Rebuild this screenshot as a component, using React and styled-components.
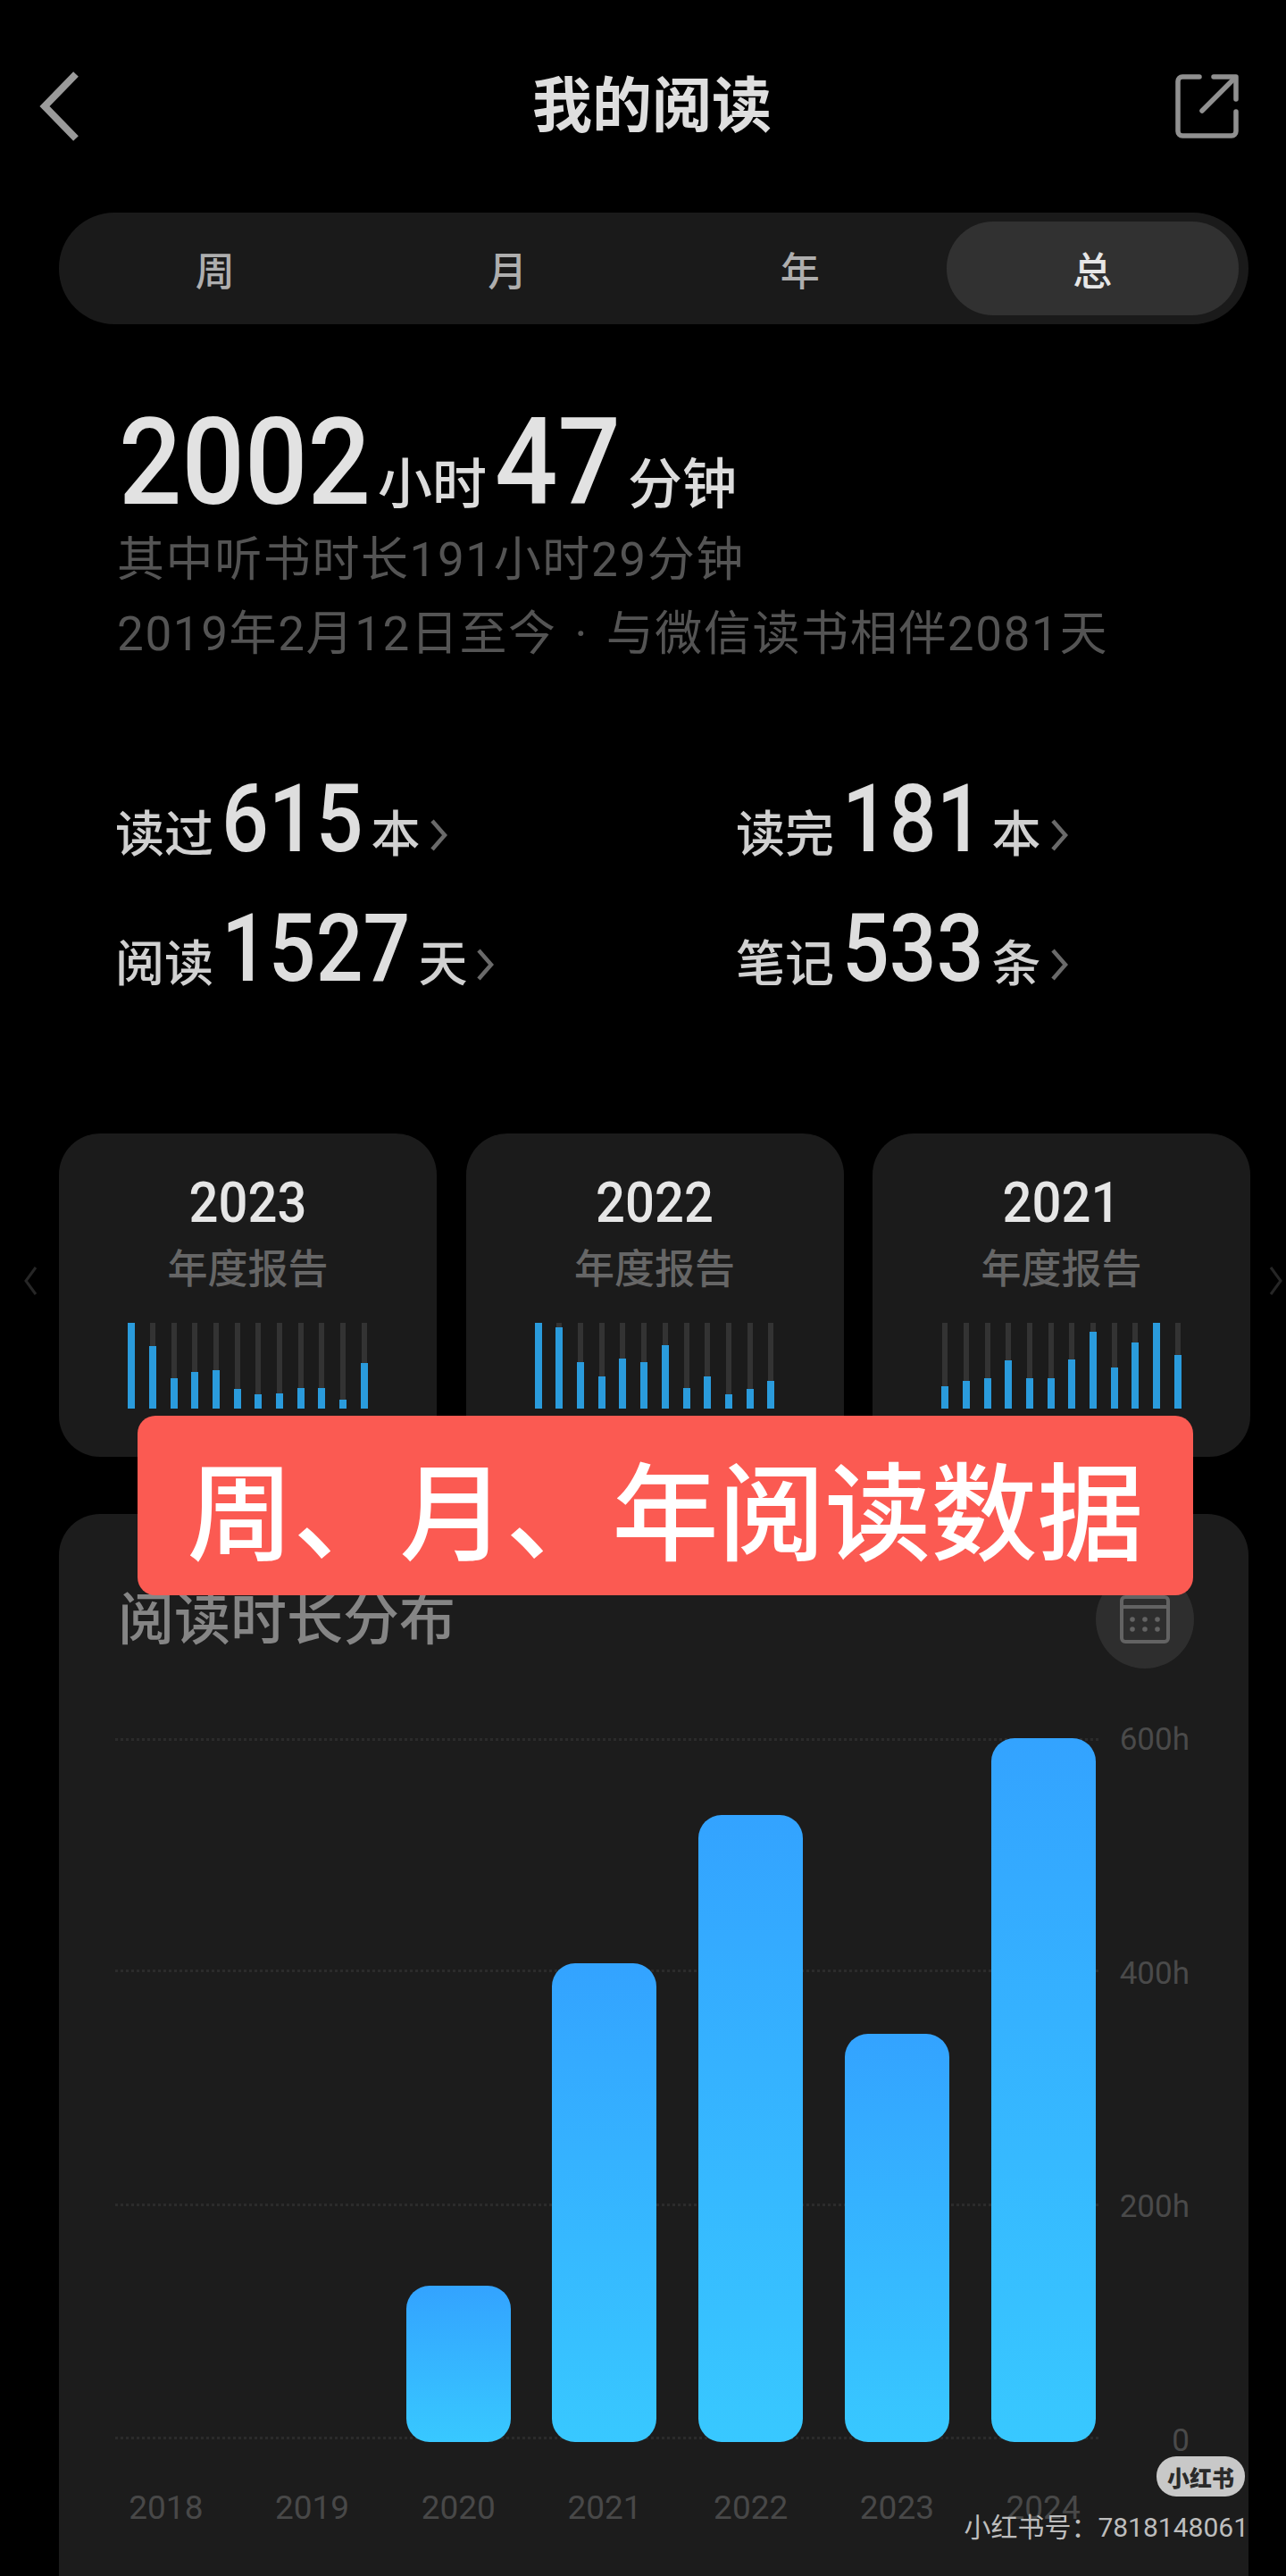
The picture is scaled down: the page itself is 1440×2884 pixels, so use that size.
import React from "react";
import styled, { createGlobalStyle } from "styled-components";

const Global = createGlobalStyle`
  html, body { margin: 0; padding: 0; background: #000; }
  * { box-sizing: border-box; }
`;

const FONT = `Roboto, "Noto Sans CJK SC", sans-serif`;

const Page = styled.div`
  position: relative;
  width: 1440px;
  height: 2884px;
  overflow: hidden;
  background: #000;
  font-family: ${FONT};
`;

const Header = styled.header`
  display: flex;
  align-items: center;
  height: 238px;
  padding: 0 52px 0 44px;
`;

const Title = styled.h1`
  flex: 1;
  margin: 0;
  padding-left: 56px;
  text-align: center;
  font-size: 67px;
  font-weight: 700;
  line-height: 1;
  color: #dedede;
`;

const Tabs = styled.div`
  display: grid;
  grid-template-columns: repeat(4, 327.5px);
  width: 1332px;
  height: 125px;
  margin-left: 66px;
  padding: 10px 11px;
  border-radius: 62px;
  background: #1a1a1a;
`;

const Tab = styled.div`
  display: flex;
  align-items: center;
  justify-content: center;
  border-radius: 52px;
  font-size: 44px;
  font-weight: 500;
  color: ${(p) => (p.$active ? "#e6e6e6" : "#aeaeae")};
  background: ${(p) => (p.$active ? "#313131" : "transparent")};
`;

const Summary = styled.section`
  margin-top: 97px;
  padding-left: 131px;
`;

const Hero = styled.div`
  display: flex;
  align-items: baseline;
  height: 126px;
  padding-left: 2px;
  color: #e2e2e2;
`;

const Numeral = styled.span`
  display: inline-block;
  font-size: ${(p) => p.$size}px;
  font-weight: 500;
  line-height: 1;
  transform: scaleY(${(p) => p.$stretch});
  transform-origin: 0 85%;
`;

const HeroUnit = styled.span`
  margin: 0 9px 0 8px;
  font-size: 61px;
  font-weight: 500;
  color: #dcdcdc;
`;

const SubLine = styled.p`
  margin: 0;
  font-size: 53px;
  line-height: 83px;
  letter-spacing: 1.6px;
  word-spacing: 5px;
  white-space: nowrap;
  color: #545454;
`;

const Stats = styled.section`
  display: grid;
  grid-template-columns: 695px 500px;
  grid-auto-rows: 145px;
  margin-top: 123px;
  padding-left: 129px;
`;

const Stat = styled.div`
  display: flex;
  align-items: baseline;
  gap: 9px;
  color: #dedede;
`;

const StatWord = styled.span`
  font-size: 55px;
  font-weight: 500;
  color: #d0d0d0;
`;

const StatArrow = styled.svg`
  width: 22px;
  height: 36px;
  fill: none;
  stroke: #6a6a6a;
  stroke-width: 4.5;
`;

const ReportRow = styled.section`
  display: grid;
  grid-template-columns: 66px 1332px 42px;
  align-items: center;
  margin-top: 104px;
`;

const SideArrow = styled.svg`
  width: 16px;
  height: 34px;
  justify-self: ${(p) => (p.$right ? "end" : "start")};
  margin: ${(p) => (p.$right ? "0 3px 32px 0" : "0 0 32px 26px")};
  fill: none;
  stroke: #262626;
  stroke-width: 3;
`;

const Reports = styled.div`
  display: grid;
  grid-template-columns: repeat(3, 423px);
  gap: 32.5px;
`;

const Report = styled.article`
  display: flex;
  flex-direction: column;
  align-items: center;
  height: 362px;
  padding-top: 50px;
  border-radius: 46px;
  background: #1b1b1b;
`;

const ReportYear = styled.div`
  height: 60px;
  line-height: 60px;
  color: #e6e6e6;
`;

const ReportLabel = styled.div`
  margin-top: 19px;
  font-size: 45px;
  font-weight: 500;
  line-height: 48px;
  color: #666;
`;

const MiniBars = styled.div`
  display: flex;
  gap: 15.7px;
  height: 96px;
  margin-top: 35px;
`;

const MiniTrack = styled.div`
  display: flex;
  align-items: flex-end;
  justify-content: center;
  width: 8px;
  height: 100%;
  background: linear-gradient(#333, #333) center / 6px 100% no-repeat;
`;

const MiniFill = styled.div`
  width: 100%;
  background: #2a9bdc;
`;

const ChartCard = styled.section`
  width: 1332px;
  height: 1300px;
  margin: 64px 0 0 66px;
  border-radius: 46px;
  background: #1c1c1c;
`;

const ChartHead = styled.div`
  display: flex;
  align-items: center;
  justify-content: space-between;
  padding: 63px 61px 0 66px;
`;

const ChartTitle = styled.h2`
  margin: 0;
  font-size: 63px;
  font-weight: 500;
  line-height: 1;
  color: #858585;
`;

const CalendarButton = styled.div`
  display: flex;
  align-items: center;
  justify-content: center;
  width: 110px;
  height: 110px;
  border-radius: 50%;
  background: #2e2e2e;
`;

const ChartBody = styled.div`
  display: flex;
  align-items: flex-start;
  margin-top: 78px;
  padding-left: 38px;
`;

const PlotColumn = styled.div`
  width: 1146px;
`;

const Plot = styled.div`
  position: relative;
  display: grid;
  grid-template-columns: repeat(7, 1fr);
  align-items: end;
  height: 788px;
`;

const GridLine = styled.div`
  position: absolute;
  left: 25px;
  right: 20px;
  top: ${(p) => p.$top}px;
  border-top: 3px dotted #2b2b2b;
`;

const BarSlot = styled.div`
  position: relative;
  display: flex;
  justify-content: center;
`;

const Bar = styled.div`
  width: 117px;
  border-radius: 26px;
  background: linear-gradient(180deg, #33a3ff 0%, #38c8ff 100%);
`;

const Years = styled.div`
  display: grid;
  grid-template-columns: repeat(7, 1fr);
  margin-top: 54px;
`;

const Year = styled.div`
  text-align: center;
  font-size: 37px;
  line-height: 40px;
  color: #484848;
`;

const Axis = styled.div`
  display: flex;
  flex-direction: column;
  justify-content: space-between;
  align-items: flex-end;
  width: 82px;
  height: 825px;
  margin-top: -18px;
  font-size: 35px;
  line-height: 40px;
  color: #4a4a4a;
`;

const Banner = styled.div`
  position: absolute;
  left: 154px;
  top: 1585px;
  display: flex;
  align-items: center;
  justify-content: center;
  width: 1182px;
  height: 201px;
  border-radius: 20px;
  background: #fb5a52;
  font-size: 119px;
  font-weight: 500;
  color: #fff;
  white-space: nowrap;
`;

const BrandPill = styled.div`
  position: absolute;
  left: 1295px;
  top: 2750px;
  display: flex;
  align-items: center;
  justify-content: center;
  width: 99px;
  height: 45px;
  border-radius: 22px;
  background: #c8c8c8;
  font-size: 25px;
  font-weight: 900;
  color: #2a2a2a;
`;

const BrandId = styled.div`
  position: absolute;
  right: 42px;
  top: 2812px;
  font-size: 30px;
  line-height: 36px;
  color: #bdbdbd;
  white-space: nowrap;
`;

const reports = [
  { year: 2023, values: [1, 0.73, 0.35, 0.43, 0.45, 0.23, 0.17, 0.18, 0.24, 0.24, 0.1, 0.53] },
  { year: 2022, values: [1, 0.95, 0.54, 0.37, 0.58, 0.54, 0.74, 0.24, 0.37, 0.17, 0.23, 0.32] },
  { year: 2021, values: [0.26, 0.32, 0.35, 0.56, 0.35, 0.35, 0.57, 0.9, 0.48, 0.77, 1, 0.62] },
];

const stats = [
  { label: "读过", value: "615", unit: "本" },
  { label: "读完", value: "181", unit: "本" },
  { label: "阅读", value: "1527", unit: "天" },
  { label: "笔记", value: "533", unit: "条" },
];

const bars = [
  { year: 2018, height: 0 },
  { year: 2019, height: 0 },
  { year: 2020, height: 175 },
  { year: 2021, height: 536 },
  { year: 2022, height: 702 },
  { year: 2023, height: 457 },
  { year: 2024, height: 788 },
];

const Back = () => (
  <svg width="44" height="78" viewBox="0 0 44 78" fill="none" stroke="#9a9a9a" strokeWidth="8">
    <path d="M41 3 L6 39 L41 75" />
  </svg>
);

const Share = () => (
  <svg width="72" height="73" viewBox="0 0 72 73" fill="none" stroke="#909090" strokeWidth="5.5" strokeLinecap="round" strokeLinejoin="round">
    <path d="M27 3 H8 a5 5 0 0 0 -5 5 V64 a5 5 0 0 0 5 5 H63 a5 5 0 0 0 5 -5 V42" />
    <path d="M43 3 H68 V28" />
    <path d="M30 41 L67 4" />
  </svg>
);

const Calendar = () => (
  <svg width="56" height="54" viewBox="0 0 56 54" fill="none" stroke="#636363" strokeWidth="4">
    <rect x="2" y="2" width="52" height="50" rx="4" />
    <path d="M2 13 H54" />
    <g fill="#636363" stroke="none">
      <circle cx="14" cy="27" r="2.8" />
      <circle cx="28" cy="27" r="2.8" />
      <circle cx="42" cy="27" r="2.8" />
      <circle cx="14" cy="38" r="2.8" />
      <circle cx="28" cy="38" r="2.8" />
      <circle cx="42" cy="38" r="2.8" />
    </g>
  </svg>
);

export default function App() {
  return (
    <Page>
      <Global />
      <Header>
        <Back />
        <Title>我的阅读</Title>
        <Share />
      </Header>

      <Tabs>
        <Tab>周</Tab>
        <Tab>月</Tab>
        <Tab>年</Tab>
        <Tab $active>总</Tab>
      </Tabs>

      <Summary>
        <Hero>
          <Numeral $size={124} $stretch={1.1}>2002</Numeral>
          <HeroUnit>小时</HeroUnit>
          <Numeral $size={124} $stretch={1.1}>47</Numeral>
          <HeroUnit>分钟</HeroUnit>
        </Hero>
        <SubLine>其中听书时长191小时29分钟</SubLine>
        <SubLine>2019年2月12日至今 · 与微信读书相伴2081天</SubLine>
      </Summary>

      <Stats>
        {stats.map((s) => (
          <Stat key={s.label}>
            <StatWord>{s.label}</StatWord>
            <Numeral $size={93} $stretch={1.13}>{s.value}</Numeral>
            <StatWord>{s.unit}</StatWord>
            <StatArrow viewBox="0 0 22 36">
              <path d="M4 2 L18 18 L4 34" />
            </StatArrow>
          </Stat>
        ))}
      </Stats>

      <ReportRow>
        <SideArrow viewBox="0 0 16 34">
          <path d="M14 2 L3 17 L14 32" />
        </SideArrow>
        <Reports>
          {reports.map((r) => (
            <Report key={r.year}>
              <ReportYear>
                <Numeral $size={58} $stretch={1.08}>{r.year}</Numeral>
              </ReportYear>
              <ReportLabel>年度报告</ReportLabel>
              <MiniBars>
                {r.values.map((v, i) => (
                  <MiniTrack key={i}>
                    <MiniFill style={{ height: `${v * 100}%` }} />
                  </MiniTrack>
                ))}
              </MiniBars>
            </Report>
          ))}
        </Reports>
        <SideArrow $right viewBox="0 0 16 34">
          <path d="M2 2 L13 17 L2 32" />
        </SideArrow>
      </ReportRow>

      <ChartCard>
        <ChartHead>
          <ChartTitle>阅读时长分布</ChartTitle>
          <CalendarButton>
            <Calendar />
          </CalendarButton>
        </ChartHead>
        <ChartBody>
          <PlotColumn>
            <Plot>
              <GridLine $top={0} />
              <GridLine $top={259} />
              <GridLine $top={521} />
              <GridLine $top={782} />
              {bars.map((b) => (
                <BarSlot key={b.year}>
                  {b.height > 0 && <Bar style={{ height: b.height }} />}
                </BarSlot>
              ))}
            </Plot>
            <Years>
              {bars.map((b) => (
                <Year key={b.year}>{b.year}</Year>
              ))}
            </Years>
          </PlotColumn>
          <Axis>
            <span>600h</span>
            <span>400h</span>
            <span>200h</span>
            <span>0</span>
          </Axis>
        </ChartBody>
      </ChartCard>

      <Banner>周、月、年阅读数据</Banner>
      <BrandPill>小红书</BrandPill>
      <BrandId>小红书号：7818148061</BrandId>
    </Page>
  );
}
